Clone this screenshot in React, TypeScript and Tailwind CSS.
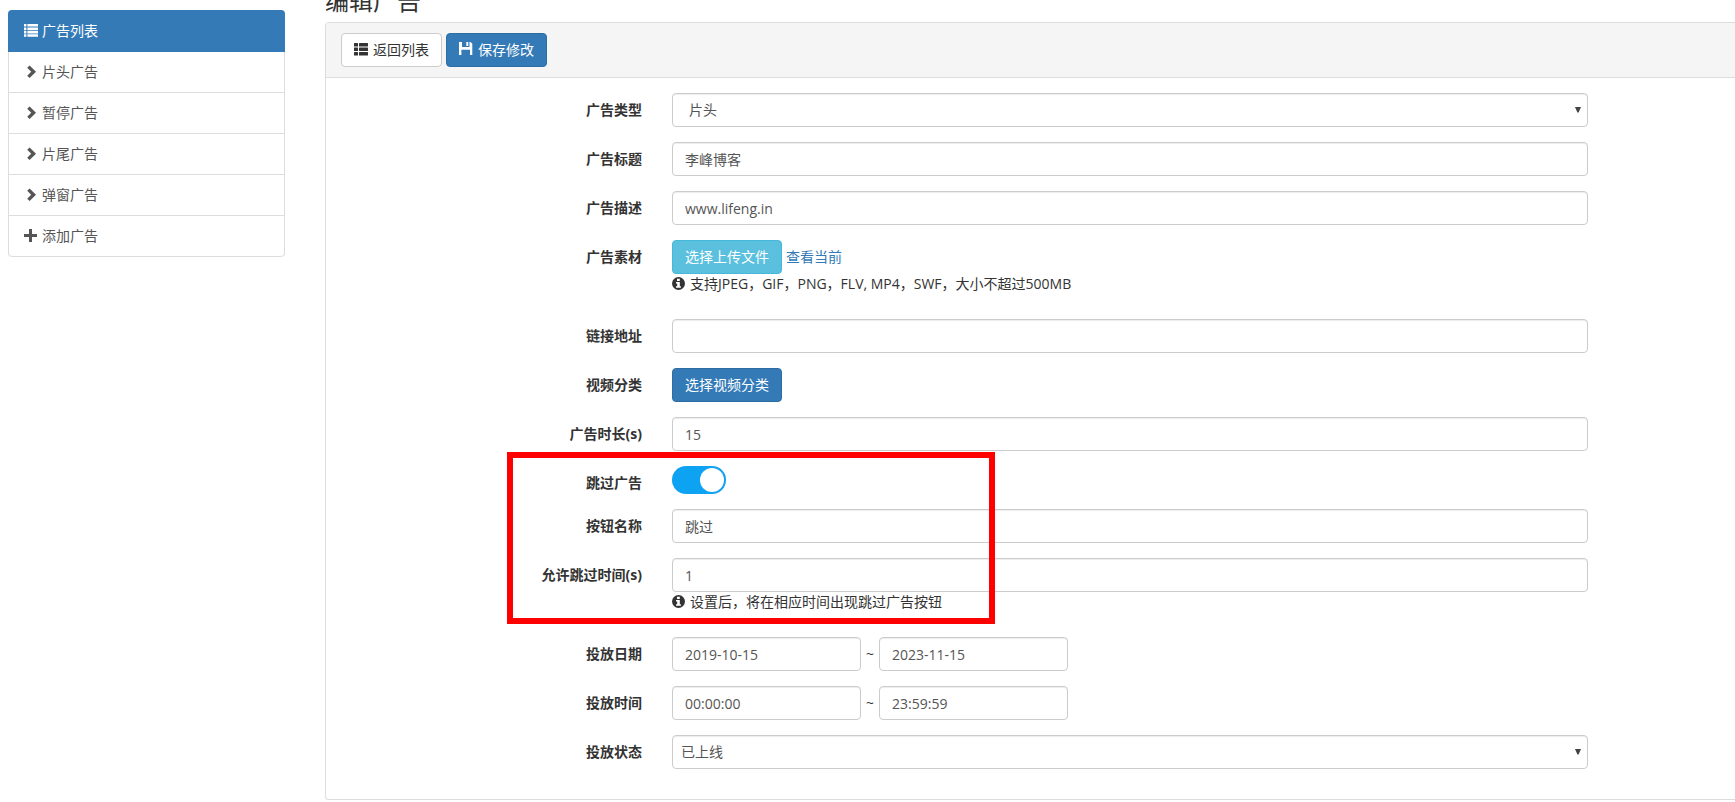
import { useState } from 'react';
import type { InputHTMLAttributes, ReactNode, SelectHTMLAttributes } from 'react';
import clsx from 'clsx';

const ListIcon = () => (
  <svg viewBox="0 0 14 14" className="size-3.5 shrink-0" fill="currentColor" aria-hidden="true">
    <path d="M0 0h2.4v2.6H0zM3.4 0H14v2.6H3.4zM0 3.4h2.4V6H0zM3.4 3.4H14V6H3.4zM0 6.8h2.4v2.6H0zM3.4 6.8H14v2.6H3.4zM0 10.2h2.4v2.6H0zM3.4 10.2H14v2.6H3.4z" />
  </svg>
);

const ThListIcon = () => (
  <svg viewBox="0 0 14 14" className="size-3.5 shrink-0" fill="currentColor" aria-hidden="true">
    <rect x="0" y="0" width="4" height="3.6" rx="0.5" />
    <rect x="5" y="0" width="9" height="3.6" rx="0.5" />
    <rect x="0" y="4.5" width="4" height="3.6" rx="0.5" />
    <rect x="5" y="4.5" width="9" height="3.6" rx="0.5" />
    <rect x="0" y="9" width="4" height="3.6" rx="0.5" />
    <rect x="5" y="9" width="9" height="3.6" rx="0.5" />
  </svg>
);

const ChevronIcon = () => (
  <svg viewBox="0 0 14 14" className="size-3.5 shrink-0" fill="currentColor" aria-hidden="true">
    <path d="M3.2 2.8 5.6.4l6.4 6.3-6.4 6.4-2.4-2.4 4-4z" />
  </svg>
);

const PlusIcon = () => (
  <svg viewBox="0 0 14 14" className="size-3.5 shrink-0" fill="currentColor" aria-hidden="true">
    <path d="M5 0h3v5h5v3H8v5H5V8H0V5h5z" />
  </svg>
);

const SaveIcon = () => (
  <svg viewBox="0 0 14 14" className="mb-0.5 size-3.5 shrink-0" fill="currentColor" aria-hidden="true">
    <path d="M0 0h3v5h7.5V0h1L13.3 1.8V13H11V7.8H2.4V13H0zM7.3 0h2v4h-2z" />
  </svg>
);

const InfoIcon = () => (
  <svg viewBox="0 0 14 14" className="size-3.5 shrink-0" aria-hidden="true">
    <circle cx="6.5" cy="6.5" r="6.5" fill="currentColor" />
    <path d="M5 1.8h2.8v2.2H5zM4 5h3.8v4.2h1.1v1.6H4V9.2h1.2V6.6H4z" fill="#fff" />
  </svg>
);

const MENU = [
  { label: '片头广告', icon: ChevronIcon },
  { label: '暂停广告', icon: ChevronIcon },
  { label: '片尾广告', icon: ChevronIcon },
  { label: '弹窗广告', icon: ChevronIcon },
  { label: '添加广告', icon: PlusIcon },
];

const CONTROL =
  'h-[34px] rounded border border-[#ccc] bg-white text-sm text-[#555] shadow-[inset_0_1px_1px_rgba(0,0,0,0.075)] outline-none focus:border-[#66afe9]';

const BUTTON = 'inline-flex h-[34px] items-center gap-[5px] rounded border px-3 text-sm';

function TextInput({ className, ...props }: InputHTMLAttributes<HTMLInputElement>) {
  return <input type="text" className={clsx(CONTROL, 'px-3', className)} {...props} />;
}

function Select({ className, children, ...props }: SelectHTMLAttributes<HTMLSelectElement>) {
  return (
    <div className="relative">
      <select className={clsx(CONTROL, 'block w-full appearance-none pr-6', className)} {...props}>
        {children}
      </select>
      <svg viewBox="0 0 6 6" className="pointer-events-none absolute top-3.5 right-[7px] size-1.5" fill="#444" aria-hidden="true">
        <path d="M0 0h6L3.6 5.4H2.4z" />
      </svg>
    </div>
  );
}

function Row({ label, htmlFor, children }: { label: string; htmlFor: string; children: ReactNode }) {
  return (
    <div className="flex gap-[30px]">
      <label htmlFor={htmlFor} className="w-[316px] shrink-0 pt-[7px] text-right font-bold">
        {label}
      </label>
      <div className="min-w-0 flex-1">{children}</div>
    </div>
  );
}

function Help({ children }: { children: ReactNode }) {
  return (
    <p className="mb-2.5 flex items-center gap-1">
      <InfoIcon />
      {children}
    </p>
  );
}

function Sidebar() {
  return (
    <nav className="mt-2.5 w-[277px] shrink-0">
      <a href="#list" className="flex h-[42px] items-center gap-1 rounded-t bg-[#337ab7] px-4 text-white">
        <ListIcon />
        广告列表
      </a>
      <div className="rounded-b border-x border-[#ddd]">
        {MENU.map(({ label, icon: Icon }) => (
          <a
            key={label}
            href="#item"
            className="flex h-[41px] items-center gap-1 border-b border-[#ddd] px-[15px] text-[#555] last:rounded-b hover:bg-[#f5f5f5]"
          >
            <Icon />
            {label}
          </a>
        ))}
      </div>
    </nav>
  );
}

export default function App() {
  const [skip, setSkip] = useState(true);

  return (
    <div className="flex gap-10 overflow-hidden bg-white pl-2 font-['Open_Sans','Noto_Sans_CJK_SC',sans-serif] text-sm leading-5 text-[#333]">
      <Sidebar />
      <main className="min-w-0 flex-1">
        <h3 className="-mt-3 mb-2 text-2xl leading-[26px] font-normal">编辑广告</h3>
        <form className="rounded-l border border-r-0 border-[#ddd] shadow-[0_1px_1px_rgba(0,0,0,0.05)]" onSubmit={(e) => e.preventDefault()}>
          <div className="flex gap-1 border-b border-[#ddd] bg-[#f5f5f5] px-[15px] py-2.5">
            <button type="button" className={clsx(BUTTON, 'border-[#ccc] bg-white')}>
              <ThListIcon />
              返回列表
            </button>
            <button type="submit" className={clsx(BUTTON, 'border-[#2e6da4] bg-[#337ab7] text-white')}>
              <SaveIcon />
              保存修改
            </button>
          </div>

          <div className="flex flex-col gap-[15px] pt-[15px] pr-[147px] pb-[30px]">
            <Row label="广告类型" htmlFor="type">
              <Select id="type" className="pl-4">
                <option>片头</option>
              </Select>
            </Row>
            <Row label="广告标题" htmlFor="title">
              <TextInput id="title" className="w-full" defaultValue="李峰博客" />
            </Row>
            <Row label="广告描述" htmlFor="desc">
              <TextInput id="desc" className="w-full" defaultValue="www.lifeng.in" />
            </Row>
            <Row label="广告素材" htmlFor="file">
              <div className="flex items-center gap-1">
                <button id="file" type="button" className={clsx(BUTTON, 'border-[#46b8da] bg-[#5bc0de] text-white')}>
                  选择上传文件
                </button>
                <a href="#current" className="text-[#337ab7]">查看当前</a>
              </div>
              <Help>支持JPEG，GIF，PNG，FLV, MP4，SWF，大小不超过500MB</Help>
            </Row>
            <Row label="链接地址" htmlFor="link">
              <TextInput id="link" className="w-full" />
            </Row>
            <Row label="视频分类" htmlFor="category">
              <button id="category" type="button" className={clsx(BUTTON, 'border-[#2e6da4] bg-[#337ab7] text-white')}>
                选择视频分类
              </button>
            </Row>
            <Row label="广告时长(s)" htmlFor="duration">
              <TextInput id="duration" className="w-full" defaultValue="15" />
            </Row>

            {/* Skip settings, highlighted */}
            <div className="relative flex flex-col gap-[15px]">
              <div className="h-7">
                <Row label="跳过广告" htmlFor="skip">
                  <label className="flex h-7 w-[54px] cursor-pointer items-center rounded-full bg-[#ccc] p-0.5 has-checked:justify-end has-checked:bg-[#0ea2f2]">
                    <input
                      id="skip"
                      type="checkbox"
                      className="sr-only"
                      checked={skip}
                      onChange={(e) => setSkip(e.target.checked)}
                    />
                    <span className="size-6 rounded-full bg-white" />
                  </label>
                </Row>
              </div>
              <Row label="按钮名称" htmlFor="skip-text">
                <TextInput id="skip-text" className="w-full" defaultValue="跳过" />
              </Row>
              <Row label="允许跳过时间(s)" htmlFor="skip-time">
                <TextInput id="skip-time" className="block w-full" defaultValue="1" />
                <Help>设置后，将在相应时间出现跳过广告按钮</Help>
              </Row>
              <div className="pointer-events-none absolute -top-3.5 -bottom-0.5 left-[181px] w-[488px] border-6 border-[#f00]" />
            </div>

            <Row label="投放日期" htmlFor="date-from">
              <div className="flex items-center">
                <TextInput id="date-from" className="w-[189px]" defaultValue="2019-10-15" />
                <span className="w-[18px] text-center">~</span>
                <TextInput aria-label="结束日期" className="w-[189px]" defaultValue="2023-11-15" />
              </div>
            </Row>
            <Row label="投放时间" htmlFor="time-from">
              <div className="flex items-center">
                <TextInput id="time-from" className="w-[189px]" defaultValue="00:00:00" />
                <span className="w-[18px] text-center">~</span>
                <TextInput aria-label="结束时间" className="w-[189px]" defaultValue="23:59:59" />
              </div>
            </Row>
            <Row label="投放状态" htmlFor="status">
              <Select id="status" className="pl-2">
                <option>已上线</option>
              </Select>
            </Row>
          </div>
        </form>
      </main>
    </div>
  );
}
